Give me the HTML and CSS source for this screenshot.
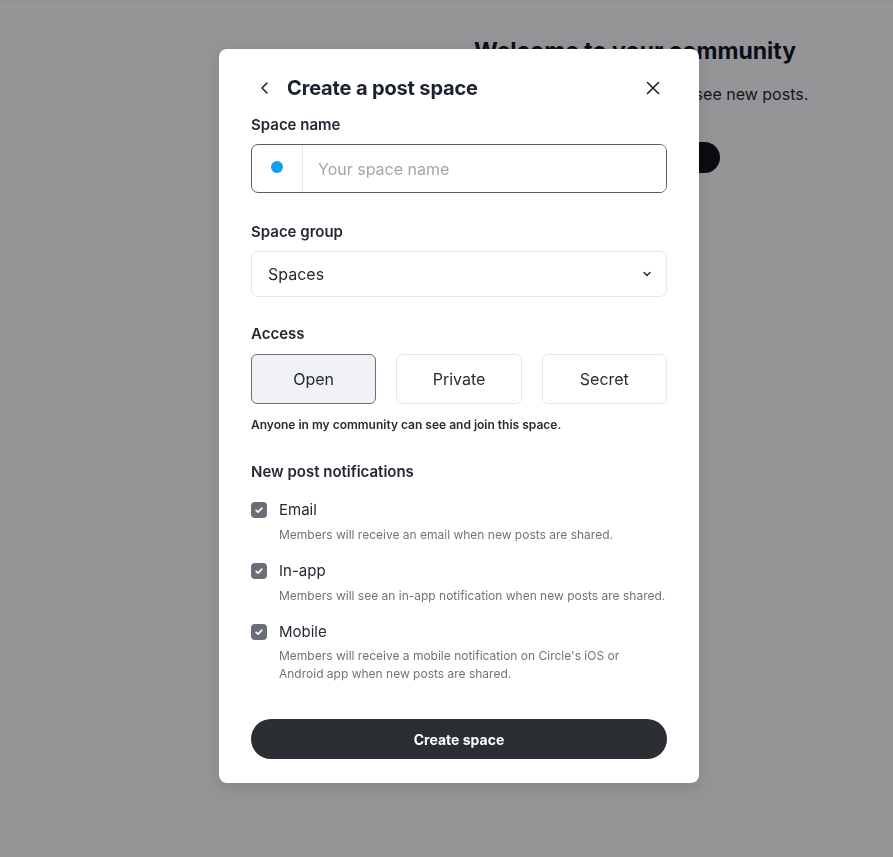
FILE: index.html
```html
<!DOCTYPE html>
<html lang="en">
<head>
    <meta charset="UTF-8">
    <meta name="viewport" content="width=device-width, initial-scale=1.0">
    <title>Create a post space</title>
    <link rel="stylesheet" href="styles.css">
</head>
<body>
    <div class="page">
        <div class="welcome">
            <h1>Welcome to your community</h1>
            <p>Invite your groups so they can see new posts.</p>
            <button class="page-btn">Create first post</button>
        </div>
    </div>

    <div class="overlay">
        <div class="modal">
            <div class="modal-header">
                <button class="icon-btn" aria-label="Back">
                    <svg width="20" height="20" viewBox="0 0 20 20" fill="none" stroke="#1f2430" stroke-width="1.6" stroke-linecap="round" stroke-linejoin="round"><path d="M12 5l-5 5 5 5"/></svg>
                </button>
                <h2>Create a post space</h2>
                <button class="icon-btn close" aria-label="Close">
                    <svg width="20" height="20" viewBox="0 0 20 20" fill="none" stroke="#1f2430" stroke-width="1.6" stroke-linecap="round"><path d="M4.5 4.5l11 11M15.5 4.5l-11 11"/></svg>
                </button>
            </div>

            <div class="field name-field">
                <label class="field-label" for="space-name">Space name</label>
                <div class="name-input">
                    <span class="emoji-slot"><span class="dot"></span></span>
                    <input type="text" id="space-name" placeholder="Your space name">
                </div>
            </div>

            <div class="field">
                <div class="field-label">Space group</div>
                <div class="select">
                    <span>Spaces</span>
                    <svg width="12" height="12" viewBox="0 0 12 12" fill="none" stroke="#2a2f38" stroke-width="1.5" stroke-linecap="round" stroke-linejoin="round"><path d="M3 4.5l3 3 3-3"/></svg>
                </div>
            </div>

            <div class="field">
                <div class="field-label">Access</div>
                <div class="access">
                    <button class="access-btn active">Open</button>
                    <button class="access-btn">Private</button>
                    <button class="access-btn">Secret</button>
                </div>
                <p class="hint">Anyone in my community can see and join this space.</p>
            </div>

            <div class="field notify">
                <div class="field-label">New post notifications</div>
                <div class="check-row">
                    <div class="check-line"><span class="checkbox"><svg width="10" height="10" viewBox="0 0 10 10" fill="none" stroke="#fff" stroke-width="1.7" stroke-linecap="round" stroke-linejoin="round"><path d="M2.2 5.3l1.9 1.8 3.7-3.9"/></svg></span>Email</div>
                    <p class="check-desc">Members will receive an email when new posts are shared.</p>
                </div>
                <div class="check-row">
                    <div class="check-line"><span class="checkbox"><svg width="10" height="10" viewBox="0 0 10 10" fill="none" stroke="#fff" stroke-width="1.7" stroke-linecap="round" stroke-linejoin="round"><path d="M2.2 5.3l1.9 1.8 3.7-3.9"/></svg></span>In-app</div>
                    <p class="check-desc">Members will see an in-app notification when new posts are shared.</p>
                </div>
                <div class="check-row">
                    <div class="check-line"><span class="checkbox"><svg width="10" height="10" viewBox="0 0 10 10" fill="none" stroke="#fff" stroke-width="1.7" stroke-linecap="round" stroke-linejoin="round"><path d="M2.2 5.3l1.9 1.8 3.7-3.9"/></svg></span>Mobile</div>
                    <p class="check-desc mobile">Members will receive a mobile notification on Circle's iOS or<br>Android app when new posts are shared.</p>
                </div>
            </div>

            <button class="submit">Create space</button>
        </div>
    </div>
</body>
</html>
```

FILE: styles.css
```css
body {
    margin: 0;
    padding: 0;
    font-family: Inter, "Noto Sans", sans-serif;
    background-color: #fff;
    color: #1d2230;
}

.page {
    height: 857px;
    padding-left: 377px;
    width: 516px;
}

.welcome {
    text-align: center;
    padding-top: 35px;
}

.welcome h1 {
    font-size: 23px;
    font-weight: 700;
    margin: 0;
    line-height: 32px;
    color: #111827;
}

.welcome p {
    font-size: 16px;
    margin: 15px 0 0;
    line-height: 24px;
    color: #1f2937;
    white-space: nowrap;
}

.page-btn {
    margin-top: 36px;
    height: 31px;
    padding: 0 30px;
    border: none;
    border-radius: 16px;
    background-color: #131417;
    color: #fff;
    font-family: Inter, sans-serif;
    font-size: 14px;
    font-weight: 600;
}

.overlay {
    position: fixed;
    top: 0;
    left: 0;
    right: 0;
    bottom: 0;
    background-color: rgba(2, 2, 6, 0.42);
    border-top: 1px solid rgba(0, 0, 0, 0.04);
}

.modal {
    position: absolute;
    top: 48px;
    left: 219px;
    width: 480px;
    box-sizing: border-box;
    padding: 25px 32px 24px;
    background-color: #fff;
    border-radius: 8px;
    box-shadow: 0 4px 16px rgba(0, 0, 0, 0.12);
}

.modal-header {
    display: flex;
    align-items: center;
    height: 28px;
    margin-bottom: 13px;
}

.modal-header h2 {
    margin: 0 0 0 12px;
    font-size: 20px;
    font-weight: 700;
    color: #1b2130;
    flex: 1;
    letter-spacing: -0.15px;
}

.icon-btn {
    width: 20px;
    height: 20px;
    padding: 0;
    border: none;
    background: none;
    display: flex;
    align-items: center;
    justify-content: center;
    margin-left: 4px;
}

.icon-btn.close {
    margin-right: 4px;
}

.field {
    margin-bottom: 27px;
}

.name-field {
    margin-bottom: 29px;
}

.field-label {
    display: block;
    font-size: 15px;
    font-weight: 600;
    line-height: 20px;
    color: #232833;
    margin-bottom: 10px;
}

.name-input {
    display: flex;
    height: 49px;
    margin: -1px 0 1px;
    box-sizing: border-box;
    border: 1px solid #585c66;
    border-radius: 7px;
    overflow: hidden;
}

.emoji-slot {
    width: 50px;
    display: flex;
    align-items: center;
    justify-content: center;
    border-right: 1px solid #e7e9ed;
}

.dot {
    width: 12px;
    height: 12px;
    border-radius: 50%;
    background-color: #129bf3;
    margin-top: -4px;
}

.name-input input {
    flex: 1;
    border: none;
    outline: none;
    padding: 0 15px;
    font-family: Inter, sans-serif;
    font-size: 16px;
    color: #1d2230;
    caret-color: #1d2230;
}

.name-input input::placeholder {
    color: #a2a6ad;
}

.select {
    height: 46px;
    margin-top: -1px;
    box-sizing: border-box;
    border: 1px solid #e6e8ec;
    border-radius: 7px;
    display: flex;
    align-items: center;
    justify-content: space-between;
    padding: 0 13px 0 16px;
    font-size: 16px;
    color: #272b33;
}

.access {
    display: flex;
    gap: 20px;
    margin-top: 1px;
}

.access-btn {
    flex: 1;
    height: 50px;
    border: 1px solid #e6e8ec;
    border-radius: 6px;
    background-color: #fff;
    font-family: Inter, sans-serif;
    font-size: 16px;
    color: #262a32;
}

.access-btn.active {
    background-color: #f0f2f5;
    border-color: #6c707a;
}

.hint {
    margin: 12px 0 0;
    font-size: 12px;
    font-weight: 600;
    line-height: 18px;
    color: #262b34;
}

.notify {
    margin-top: 28px;
    margin-bottom: 37px;
}

.notify .field-label {
    margin-bottom: 18px;
}

.check-row {
    margin-bottom: 17px;
}

.check-row:last-child {
    margin-bottom: 0;
}

.check-line {
    display: flex;
    align-items: center;
    gap: 12px;
    font-size: 15px;
    line-height: 20px;
    color: #242933;
}

.checkbox {
    width: 16px;
    height: 16px;
    border-radius: 4px;
    background-color: #6b6e77;
    display: flex;
    align-items: center;
    justify-content: center;
}

.check-desc {
    margin: 6px 0 0 28px;
    font-size: 12px;
    line-height: 18px;
    color: #6f737b;
}

.check-desc.mobile {
    margin-top: 5px;
    line-height: 17.5px;
}

.submit {
    width: 100%;
    height: 40px;
    border: none;
    border-radius: 20px;
    background-color: #2b2e33;
    color: #fff;
    font-family: Inter, sans-serif;
    font-size: 14px;
    font-weight: 700;
}
```
